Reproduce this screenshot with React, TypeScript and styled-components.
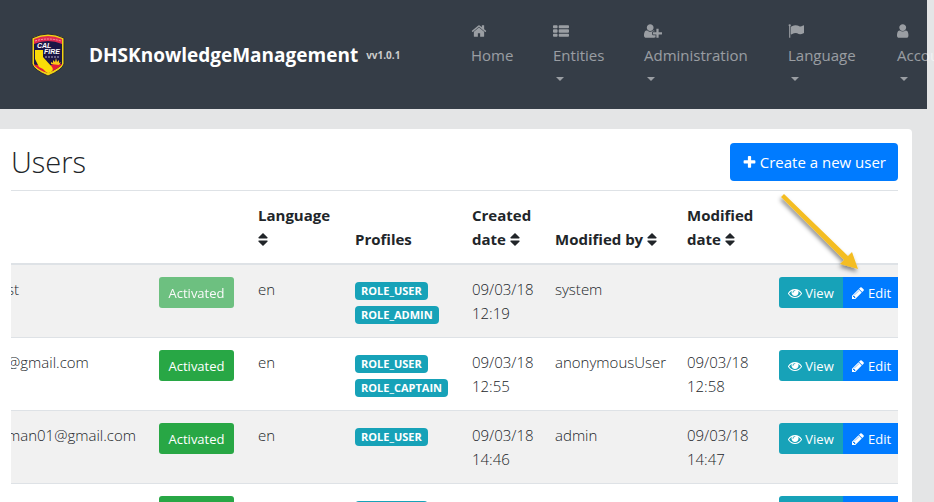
import React from "react";
import styled, { createGlobalStyle } from "styled-components";

const GlobalStyle = createGlobalStyle`
  *, *::before, *::after { box-sizing: border-box; }
  html, body { margin: 0; }
  body {
    background: #e4e5e6;
    color: #212529;
    font-family: "Open Sans", "Noto Sans", sans-serif;
    font-size: 15px;
    font-weight: 300;
    line-height: 24px;
  }
`;

const Page = styled.div`
  height: 100vh;
  overflow: hidden;
`;

const Navbar = styled.nav`
  display: flex;
  align-items: center;
  height: 109px;
  margin-right: 7px;
  padding-left: 31px;
  background: #353d47;
`;

const Brand = styled.a`
  display: flex;
  align-items: center;
  flex: 0 0 440px;
  color: #fff;
  text-decoration: none;
  white-space: nowrap;
`;

const BrandName = styled.span`
  margin: 0 8px 0 23px;
  font-size: 19px;
  font-weight: 700;
`;

const Version = styled.span`
  color: #ccc;
  font-size: 10px;
  font-weight: 700;
`;

const NavList = styled.ul`
  display: grid;
  grid-template-columns: 82px 91px 144px 109px auto;
  margin: 0;
  padding: 0;
  list-style: none;
`;

const NavLink = styled.a`
  display: flex;
  flex-direction: column;
  color: rgba(255, 255, 255, 0.5);
  font-weight: 400;
  text-decoration: none;
  white-space: nowrap;
`;

const NavIcon = styled.span`
  display: flex;
  align-items: center;
  height: 24px;
`;

const Caret = styled.span`
  width: 8px;
  margin: 10px 0 10px 3px;
  border: 4px solid transparent;
  border-top-color: currentColor;
  border-bottom: 0;
`;

const Card = styled.main`
  position: relative;
  min-height: 100vh;
  margin: 20px 22px 0 0;
  padding: 14px 14px 14px 11px;
  border-radius: 0 4px 0 0;
  background: #fff;
`;

const CardHeader = styled.header`
  display: flex;
  align-items: center;
  justify-content: space-between;
  margin-bottom: 9px;
`;

const Title = styled.h2`
  margin: 0;
  font-size: 29px;
  font-weight: 300;
  line-height: 38px;
`;

const buttonColors = {
  primary: "#007bff",
  success: "#28a745",
  info: "#17a2b8",
};

const Button = styled.button<{ $tone: keyof typeof buttonColors; $large?: boolean }>`
  display: inline-flex;
  align-items: center;
  justify-content: center;
  gap: 3px;
  height: ${(p) => (p.$large ? "38px" : "31px")};
  padding: 0 ${(p) => (p.$large ? "12px" : "9px")};
  border: 0;
  border-radius: ${(p) => (p.$large ? "4px" : "3px")};
  background: ${(p) => buttonColors[p.$tone]};
  color: #fff;
  font-family: inherit;
  font-size: ${(p) => (p.$large ? "15px" : "13px")};
  font-weight: 400;
  white-space: nowrap;
  cursor: pointer;
  &:disabled {
    opacity: 0.65;
    cursor: default;
  }
`;

const StatusButton = styled(Button)`
  width: 75px;
`;

const ButtonGroup = styled.div`
  display: flex;
`;

const ViewButton = styled(Button)`
  flex: 0 0 64px;
  border-radius: 3px 0 0 3px;
`;

const EditButton = styled(Button)`
  flex: 0 0 57px;
  justify-content: flex-start;
  padding-left: 8px;
  border-radius: 0;
`;

const TableScroll = styled.div`
  overflow: hidden;
`;

const Table = styled.table`
  width: calc(100% + 4px);
  margin-left: -4px;
  border-collapse: separate;
  border-spacing: 0;
  table-layout: fixed;
`;

const Col = styled.col<{ $width?: number }>`
  width: ${(p) => (p.$width ? `${p.$width}px` : "auto")};
`;

const HeadCell = styled.th`
  padding: 12px 0 12px 12px;
  border-top: 1px solid #dee2e6;
  border-bottom: 2px solid #dee2e6;
  font-weight: 700;
  text-align: left;
  vertical-align: bottom;
`;

const Row = styled.tr`
  &:nth-child(odd) { background: #f1f1f1; }
  &:not(:first-child) > td { border-top: 1px solid #dee2e6; }
`;

const Cell = styled.td`
  height: 72px;
  padding: 12px 0 12px 12px;
  vertical-align: top;
`;

const EmailCell = styled(Cell)`
  padding-left: 0;
`;

const Profiles = styled.div`
  display: flex;
  flex-direction: column;
  align-items: flex-start;
  gap: 6px;
  padding-top: 5px;
`;

const Badge = styled.span`
  height: 18px;
  padding: 0 6px;
  border-radius: 4px;
  background: #17a2b8;
  color: #fff;
  font-size: 11px;
  font-weight: 700;
  line-height: 17px;
`;

const Pointer = styled.svg`
  position: absolute;
  top: 57px;
  right: 38px;
  pointer-events: none;
`;

const SortSvg = styled.svg`
  vertical-align: -1px;
`;

const paths = {
  home: "M1472 992v480q0 26-19 45t-45 19h-384v-384h-256v384h-384q-26 0-45-19t-19-45v-480q0-1 .5-3t.5-3l575-474 575 474q1 2 1 6zm223-69l-62 74q-8 9-21 11h-3q-13 0-21-7l-692-577-692 577q-12 8-24 7-13-2-21-11l-62-74q-8-10-7-23.5t11-21.5l719-599q32-26 76-26t76 26l244 204v-195q0-14 9-23t23-9h192q14 0 23 9t9 23v408l219 182q10 8 11 21.5t-7 23.5z",
  list: "M96 256h320q96 0 96 96v128q0 96-96 96H96q-96 0-96-96V352q0-96 96-96zM96 704h320q96 0 96 96v192q0 96-96 96H96q-96 0-96-96V800q0-96 96-96zM96 1216h320q96 0 96 96v128q0 96-96 96H96q-96 0-96-96v-128q0-96 96-96zM736 256h960q96 0 96 96v128q0 96-96 96H736q-96 0-96-96V352q0-96 96-96zM736 704h960q96 0 96 96v192q0 96-96 96H736q-96 0-96-96V800q0-96 96-96zM736 1216h960q96 0 96 96v128q0 96-96 96H736q-96 0-96-96v-128q0-96 96-96z",
  userPlus: "M704 896q-159 0-271.5-112.5t-112.5-271.5 112.5-271.5 271.5-112.5 271.5 112.5 112.5 271.5-112.5 271.5-271.5 112.5zm960 128h352q13 0 22.5 9.5t9.5 22.5v192q0 13-9.5 22.5t-22.5 9.5h-352v352q0 13-9.5 22.5t-22.5 9.5h-192q-13 0-22.5-9.5t-9.5-22.5v-352h-352q-13 0-22.5-9.5t-9.5-22.5v-192q0-13 9.5-22.5t22.5-9.5h352v-352q0-13 9.5-22.5t22.5-9.5h192q13 0 22.5 9.5t9.5 22.5v352zm-736 224q0 52 38 90t90 38h256v238q-68 50-171 50h-874q-121 0-194-69t-73-190q0-53 3.5-103.5t14-109 26.5-108.5 43-97.5 62-81 85.5-53.5 111.5-20q19 0 39 17 79 61 154.5 91.5t164.5 30.5 164.5-30.5 154.5-91.5q20-17 39-17 132 0 217 96h-223q-52 0-90 38t-38 90v192z",
  flag: "M320 256q0 72-64 110v1266q0 13-9.5 22.5t-22.5 9.5h-64q-13 0-22.5-9.5t-9.5-22.5v-1266q-64-38-64-110 0-53 37.5-90.5t90.5-37.5 90.5 37.5 37.5 90.5zm1472 64v763q0 25-12.5 38.5t-39.5 27.5q-215 116-369 116-61 0-123.5-22t-108.5-48-115.5-48-142.5-22q-192 0-464 146-17 9-33 9-26 0-45-19t-19-45v-742q0-32 31-55 21-14 79-43 236-120 421-120 107 0 200 29t219 88q38 19 88 19 54 0 117.5-21t110-47 88-47 54.5-21q26 0 45 19t19 45z",
  user: "M1280 1399q0 109-62.5 187t-150.5 78h-854q-88 0-150.5-78t-62.5-187q0-85 8.5-160.5t31.5-152 58.5-131 94-89 134.5-34.5q131 128 313 128t313-128q76 0 134.5 34.5t94 89 58.5 131 31.5 152 8.5 160.5zm-256-887q0 159-112.5 271.5t-271.5 112.5-271.5-112.5-112.5-271.5 112.5-271.5 271.5-112.5 271.5 112.5 112.5 271.5z",
  plus: "M1600 736v192q0 40-28 68t-68 28h-416v416q0 40-28 68t-68 28h-192q-40 0-68-28t-28-68v-416h-416q-40 0-68-28t-28-68v-192q0-40 28-68t68-28h416v-416q0-40 28-68t68-28h192q40 0 68 28t28 68v416h416q40 0 68 28t28 68z",
  eye: "M1664 960q-152-236-381-353 61 104 61 225 0 185-131.5 316.5t-316.5 131.5-316.5-131.5-131.5-316.5q0-121 61-225-229 117-381 353 133 205 333.5 326.5t434.5 121.5 434.5-121.5 333.5-326.5zm-720-384q0-20-14-34t-34-14q-125 0-214.5 89.5t-89.5 214.5q0 20 14 34t34 14 34-14 14-34q0-86 61-147t147-61q20 0 34-14t14-34zm848 384q0 34-20 69-140 230-376.5 368.5t-499.5 138.5-499.5-139-376.5-368q-20-35-20-69t20-69q140-229 376.5-368t499.5-139 499.5 139 376.5 368q20 35 20 69z",
  pencil: "M491 1536l91-91-235-235-91 91v107h128v128h107zm523-928q0-22-22-22-10 0-17 7l-542 542q-7 7-7 17 0 22 22 22 10 0 17-7l542-542q7-7 7-17zm-54-192l416 416-832 832h-416v-416zm683 96q0 53-37 90l-166 166-416-416 166-165q36-38 90-38 53 0 91 38l235 234q37 39 37 91z",
};

type IconName = keyof typeof paths;

function Icon({ name, size }: { name: IconName; size: number }) {
  const box = name === "userPlus" ? 2048 : 1792;
  return (
    <svg
      width={Math.round((size * box) / 1792)}
      height={size}
      viewBox={`0 0 ${box} 1792`}
      fill="currentColor"
      aria-hidden="true"
    >
      <path d={paths[name]} />
    </svg>
  );
}

function SortIcon() {
  return (
    <SortSvg width="10" height="13" viewBox="0 0 10 13" fill="currentColor" aria-hidden="true">
      <path d="M5 0 9.6 4.6Q9.9 5.4 9 5.4H1Q.1 5.4.4 4.6ZM5 13 .4 8.4Q.1 7.6 1 7.6H9q.9 0 .6.8Z" />
    </SortSvg>
  );
}

function Logo() {
  return (
    <svg width="35" height="44" viewBox="0 0 35 44" role="img" aria-label="Cal Fire">
      <path d="M1 5Q9 1 17 1T33 5V31Q31 37 17 43Q3 37 1 31Z" fill="#f0d313" stroke="#2b2a35" strokeWidth="1" />
      <path d="M3 7Q10 4 17 4T31 7V31Q29 35 17 40Q5 35 3 31Z" fill="#1d1646" />
      <path d="M3 6Q10 3 17 3T31 6V11Q24 8 17 8T3 11Z" fill="#e02a50" />
      <path d="M4 8Q17 4 30 8" fill="none" stroke="#f79aa8" strokeWidth="1" strokeDasharray="2 1" />
      <path d="M3 32Q8 31 12 34T20 32Q25 29 31 31Q29 35 17 40Q7 37 3 32Z" fill="#e31d38" />
      <path d="m20 31 0-2 2 1 0-3 2 2 1-4 1 4 2-2 0 3 2-1-2 3Z" fill="#f8c719" />
      <path d="M4 17H12V24L21 34Q23 37 20 39Q17 41 15 39L12 36 8 34 6 30 4 26Z" fill="#fadc08" />
      <text x="6" y="15" fill="#fff" fontFamily="Liberation Sans, sans-serif" fontSize="7" fontWeight="700" fontStyle="italic">CAL</text>
      <text x="13" y="21" fill="#fff" fontFamily="Liberation Sans, sans-serif" fontSize="7" fontWeight="700" fontStyle="italic">FIRE</text>
      <path d="M14 24H29" stroke="#b6b0cc" strokeWidth="1" strokeDasharray="2 1" />
    </svg>
  );
}

const navItems: { label: string; icon: IconName; menu: boolean }[] = [
  { label: "Home", icon: "home", menu: false },
  { label: "Entities", icon: "list", menu: true },
  { label: "Administration", icon: "userPlus", menu: true },
  { label: "Language", icon: "flag", menu: true },
  { label: "Account", icon: "user", menu: true },
];

const columnWidths = [140, 99, 97, 117, 83, 132, 92];

const users = [
  { email: "st", locked: true, roles: ["ROLE_USER", "ROLE_ADMIN"], created: ["09/03/18", "12:19"], by: "system", modified: [] },
  { email: "@gmail.com", locked: false, roles: ["ROLE_USER", "ROLE_CAPTAIN"], created: ["09/03/18", "12:55"], by: "anonymousUser", modified: ["09/03/18", "12:58"] },
  { email: "man01@gmail.com", locked: false, roles: ["ROLE_USER"], created: ["09/03/18", "14:46"], by: "admin", modified: ["09/03/18", "14:47"] },
  { email: "", locked: false, roles: ["ROLE_USER"], created: [], by: "", modified: [] },
];

function DateLines({ parts }: { parts: string[] }) {
  return <>{parts.map((part) => <div key={part}>{part}</div>)}</>;
}

export default function App() {
  return (
    <Page>
      <GlobalStyle />
      <Navbar>
        <Brand href="#">
          <Logo />
          <BrandName>DHSKnowledgeManagement</BrandName>
          <Version>vv1.0.1</Version>
        </Brand>
        <NavList>
          {navItems.map((item) => (
            <li key={item.label}>
              <NavLink href="#">
                <NavIcon><Icon name={item.icon} size={16} /></NavIcon>
                <span>{item.label}</span>
                {item.menu && <Caret />}
              </NavLink>
            </li>
          ))}
        </NavList>
      </Navbar>
      <Card>
        <CardHeader>
          <Title>Users</Title>
          <Button $tone="primary" $large>
            <Icon name="plus" size={15} />
            Create a new user
          </Button>
        </CardHeader>
        <TableScroll>
          <Table>
            <colgroup>
              {columnWidths.map((width, i) => <Col key={i} $width={width} />)}
              <Col />
            </colgroup>
            <thead>
              <tr>
                <HeadCell />
                <HeadCell />
                <HeadCell>Language<br /><SortIcon /></HeadCell>
                <HeadCell>Profiles</HeadCell>
                <HeadCell>Created<br />date <SortIcon /></HeadCell>
                <HeadCell>Modified by <SortIcon /></HeadCell>
                <HeadCell>Modified<br />date <SortIcon /></HeadCell>
                <HeadCell />
              </tr>
            </thead>
            <tbody>
              {users.map((user, i) => (
                <Row key={i}>
                  <EmailCell>{user.email}</EmailCell>
                  <Cell><StatusButton $tone="success" disabled={user.locked}>Activated</StatusButton></Cell>
                  <Cell>{user.email && "en"}</Cell>
                  <Cell>
                    <Profiles>
                      {user.roles.map((role) => <Badge key={role}>{role}</Badge>)}
                    </Profiles>
                  </Cell>
                  <Cell><DateLines parts={user.created} /></Cell>
                  <Cell>{user.by}</Cell>
                  <Cell><DateLines parts={user.modified} /></Cell>
                  <Cell>
                    <ButtonGroup>
                      <ViewButton $tone="info"><Icon name="eye" size={14} />View</ViewButton>
                      <EditButton $tone="primary"><Icon name="pencil" size={14} />Edit</EditButton>
                    </ButtonGroup>
                  </Cell>
                </Row>
              ))}
            </tbody>
          </Table>
        </TableScroll>
        <Pointer width="100" height="92" viewBox="0 0 100 92" aria-hidden="true">
          <defs>
            <filter id="shadow" x="-20%" y="-20%" width="150%" height="150%">
              <feDropShadow dx="-1" dy="3" stdDeviation="2" floodColor="#000" floodOpacity="0.45" />
            </filter>
          </defs>
          <path d="M10 8 74 70 78 66 84 83 66 78 70 74 7 11Z" fill="#f4bd22" filter="url(#shadow)" />
        </Pointer>
      </Card>
    </Page>
  );
}
